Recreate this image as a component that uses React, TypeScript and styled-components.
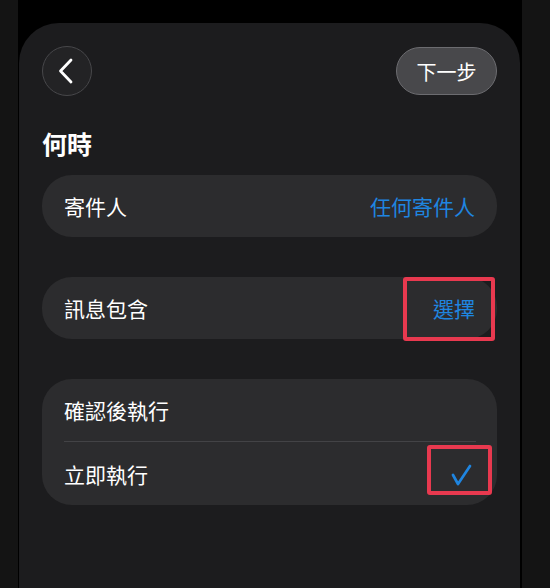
import styled, {createGlobalStyle} from 'styled-components'

const GlobalStyle = createGlobalStyle`
  html, body {
    margin: 0;
    padding: 0;
    background: #000;
    font-family: 'Noto Sans CJK TC', 'Noto Sans', sans-serif;
  }
`

const App = () => {
  return (
    <>
      <GlobalStyle />
      <Screen>
        <SideStrip />
        <Sheet>
          <Header>
            <BackButton aria-label='back'>
              <svg width='16' height='26' viewBox='0 0 16 26'>
                <path d='M13 2 L2.5 13 L13 24' fill='none' stroke='#fff' strokeWidth='2.8' strokeLinecap='round' strokeLinejoin='round' />
              </svg>
            </BackButton>
            <NextButton>下一步</NextButton>
          </Header>

          <Title>何時</Title>

          <Card>
            <Row>
              <Label>寄件人</Label>
              <Value>任何寄件人</Value>
            </Row>
          </Card>

          <Card>
            <Row>
              <Label>訊息包含</Label>
              <Value>選擇</Value>
            </Row>
            <Highlight $top={0} $right={2} $width={92} $height={64} />
          </Card>

          <Card>
            <Row>
              <Label>確認後執行</Label>
            </Row>
            <Divider />
            <Row $tall>
              <Label>立即執行</Label>
              <CheckIcon viewBox='0 0 24 24' width='24' height='24'>
                <path d='M4 13 L9 22 L21 4' fill='none' stroke='#1f85e0' strokeWidth='2.7' strokeLinecap='round' strokeLinejoin='round' />
              </CheckIcon>
            </Row>
            <Highlight $top={66} $right={5} $width={65} $height={50} />
          </Card>
        </Sheet>
        <SideStrip $right />
      </Screen>
    </>
  )
}

export default App

const Screen = styled.div`
  display: flex;
  height: 588px;
  width: 550px;
  background: #000;
  overflow: hidden;
`

const SideStrip = styled.div<{$right?: boolean}>`
  width: ${p => (p.$right ? '28px' : '18px')};
  margin-left: ${p => (p.$right ? '2px' : '0')};
  margin-right: ${p => (p.$right ? '0' : '1px')};
  background: #141414;
  flex-shrink: 0;
`

const Sheet = styled.div`
  width: 501px;
  margin-top: 23px;
  background: #1c1c1e;
  border-radius: 40px 40px 0 0;
  padding: 23px 23px 0 23px;
  box-sizing: border-box;
  display: flex;
  flex-direction: column;
`

const Header = styled.div`
  display: flex;
  justify-content: space-between;
  align-items: center;
  height: 50px;
`

const BackButton = styled.div`
  width: 50px;
  height: 50px;
  border-radius: 50%;
  background: #232325;
  border: 1px solid #47474a;
  box-sizing: border-box;
  display: flex;
  align-items: center;
  justify-content: center;
  padding-right: 3px;
`

const NextButton = styled.div`
  height: 48px;
  width: 101px;
  border-radius: 24px;
  background: #48484b;
  border: 1px solid #6c6c70;
  box-sizing: border-box;
  color: #fff;
  font-size: 20px;
  display: flex;
  align-items: center;
  justify-content: center;
`

const Title = styled.div`
  color: #fff;
  font-size: 25px;
  font-weight: 700;
  margin-top: 30px;
  line-height: 34px;
  margin-bottom: 3px;
`

const Card = styled.div`
  position: relative;
  background: #2c2c2e;
  border-radius: 30px;
  margin-top: 12px;
  & + & {
    margin-top: 40px;
  }
`

const Row = styled.div<{$tall?: boolean}>`
  display: flex;
  align-items: center;
  justify-content: space-between;
  height: ${p => (p.$tall ? '63px' : '62px')};
  padding: 0 22px 0 22px;
`

const Label = styled.span`
  color: #fff;
  font-size: 21px;
`

const Value = styled.span`
  color: #1f85e0;
  font-size: 21px;
`

const Divider = styled.div`
  height: 1px;
  background: #434346;
  margin: 0 21px 0 22px;
`

const CheckIcon = styled.svg`
  margin-right: 2px;
  margin-top: 0;
`

const Highlight = styled.div<{$top: number; $right: number; $width: number; $height: number}>`
  position: absolute;
  top: ${p => p.$top}px;
  right: ${p => p.$right}px;
  width: ${p => p.$width}px;
  height: ${p => p.$height}px;
  border: 4px solid #e8394f;
  border-radius: 3px;
  box-sizing: border-box;
`
